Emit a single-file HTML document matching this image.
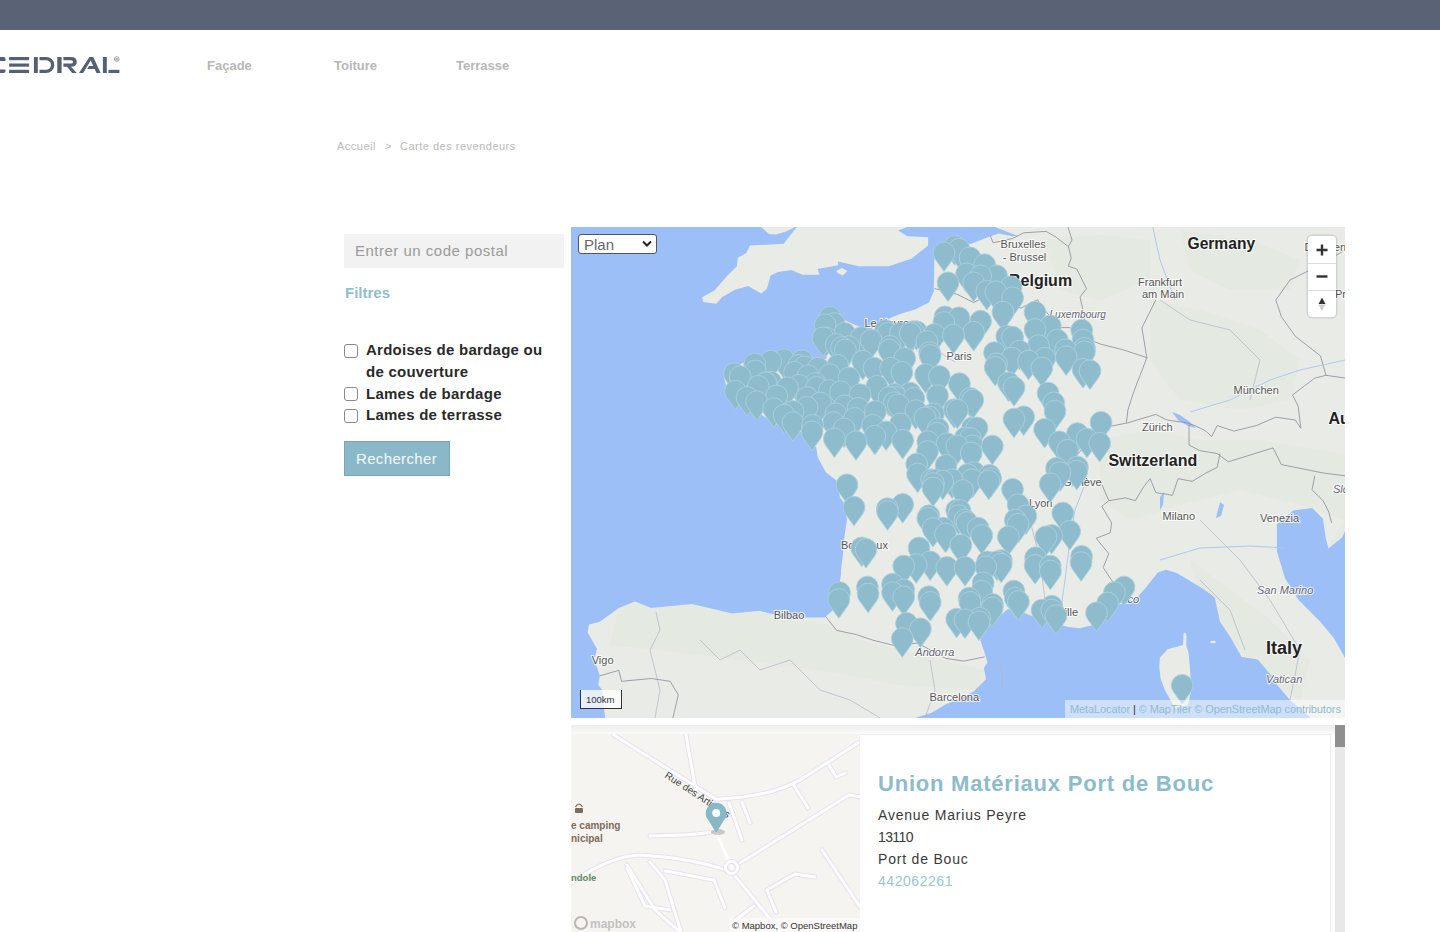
<!DOCTYPE html>
<html><head><meta charset="utf-8">
<style>
html,body{margin:0;padding:0;width:1440px;height:932px;overflow:hidden;background:#fff;font-family:"Liberation Sans",sans-serif;}
.abs{position:absolute;}
#topbar{left:0;top:0;width:1440px;height:30px;background:#5a6275;}
.nav{top:58px;font-size:13px;font-weight:bold;color:#b7b7b7;white-space:nowrap;}
.bc{top:140px;font-size:11px;color:#b9b9b9;white-space:nowrap;letter-spacing:0.5px;}
#postal{left:344px;top:234px;width:220px;height:34px;background:#f2f2f2;}
#postal span{position:absolute;left:11px;top:8px;font-size:15px;color:#9a9a9a;white-space:nowrap;letter-spacing:0.5px;}
#filtres{left:345px;top:284px;font-size:15px;font-weight:bold;color:#8fbfcf;}
.cb{left:344px;width:12px;height:12px;border:1px solid #8a8a8a;border-radius:3px;background:#fff;}
.lbl{left:366px;font-size:15px;font-weight:bold;color:#2a2a2a;white-space:nowrap;letter-spacing:0.25px;}
#btn{left:344px;top:441px;width:104px;height:33px;background:#8ab8c8;border:1px solid #76a6b6;}
#btn span{position:absolute;left:11px;top:8px;font-size:15px;color:#f4f8fa;letter-spacing:0.35px;}
#map{left:571px;top:227px;width:774px;height:491px;overflow:hidden;background:#e9ebe7;}
#list{left:571px;top:725px;width:774px;height:207px;background:#fff;overflow:hidden;}
</style></head>
<body>
<div id="topbar" class="abs"></div>
<!-- logo -->
<svg class="abs" style="left:0;top:50px" width="125" height="30" viewBox="0 50 125 30">
<g fill="#566074">
<path d="M-6 57 H3.5 Q5.5 57 5.5 59 V61 H-6 Z"/>
<path d="M-6 73 H3.5 Q5.5 73 5.5 71 V69.5 H-6 Z"/>
<rect x="9.1" y="57" width="20" height="3.2"/>
<rect x="9.1" y="63.5" width="20" height="3.2"/>
<rect x="9.1" y="69.8" width="20" height="3.2"/>
<rect x="33.9" y="57" width="3.9" height="16"/>
<path d="M39.5 57 H46 A8.3 8 0 0 1 46 73 H39.5 V69.8 H46 A5 4.8 0 0 0 46 60.2 H39.5 Z"/>
<rect x="57.3" y="57" width="4.3" height="16"/>
<path d="M63.4 57 H71 Q76.8 57 76.8 61.9 Q76.8 66.7 71 66.7 L76.8 73 H72.2 L67 66.7 H63.4 V63.5 H71 Q73 63.5 73 61.9 Q73 60.2 71 60.2 H63.4 Z"/>
<path d="M79 73 L89.4 57 H93.2 L100.7 73 H96.5 L94.6 69 H87.2 L89 66 H93.2 L90.7 60.6 L83.2 73 Z"/>
<rect x="102.9" y="57" width="3.9" height="16"/>
<rect x="108.5" y="69.8" width="10.9" height="3.2"/>
<circle cx="116.8" cy="59.1" r="2.4" fill="none" stroke="#8a92a2" stroke-width="0.8"/><text x="115.3" y="60.8" font-size="4.2" font-weight="bold" fill="#8a92a2" font-family="Liberation Sans">R</text>
</g>
</svg>
<div class="abs nav" style="left:207px">Façade</div>
<div class="abs nav" style="left:334px">Toiture</div>
<div class="abs nav" style="left:456px">Terrasse</div>
<div class="abs bc" style="left:337px">Accueil</div>
<div class="abs bc" style="left:385px">&gt;</div>
<div class="abs bc" style="left:400px">Carte des revendeurs</div>

<div id="postal" class="abs"><span>Entrer un code postal</span></div>
<div id="filtres" class="abs">Filtres</div>
<div class="abs cb" style="top:344px"></div>
<div class="abs cb" style="top:387px"></div>
<div class="abs cb" style="top:409px"></div>
<div class="abs lbl" style="top:341px">Ardoises de bardage ou</div>
<div class="abs lbl" style="top:363px">de couverture</div>
<div class="abs lbl" style="top:385px">Lames de bardage</div>
<div class="abs lbl" style="top:406px">Lames de terrasse</div>
<div id="btn" class="abs"><span>Rechercher</span></div>

<div id="map" class="abs">
<svg width="774" height="491" viewBox="571 227 774 491" style="position:absolute;left:0;top:0">
<rect x="571" y="227" width="774" height="491" fill="#e9ebe7"/>
<polygon points="1100,440 1150,430 1200,440 1260,440 1320,450 1345,455 1345,520 1300,505 1240,490 1180,505 1130,520 1100,500" fill="#e2e8df" opacity="0.75"/>
<polygon points="1150,300 1200,310 1260,330 1300,360 1290,400 1240,410 1180,400 1150,360" fill="#e2e8df" opacity="0.75"/>
<polygon points="1180,230 1250,240 1300,260 1290,290 1230,290 1190,270" fill="#e2e8df" opacity="0.75"/>
<polygon points="620,605 700,600 780,615 830,625 860,640 900,650 960,665 985,670 980,690 900,685 820,670 740,660 660,650 610,645" fill="#e2e8df" opacity="0.75"/>
<polygon points="1190,560 1230,590 1270,620 1310,660 1300,700 1270,680 1230,640 1200,600" fill="#e2e8df" opacity="0.75"/>
<polygon points="1345,520 1345,600 1320,560" fill="#e2e8df" opacity="0.75"/>
<polygon points="1045,240 1100,235 1150,240 1150,280 1100,300 1060,290" fill="#e2e8df" opacity="0.75"/>
<polygon points="571.0,227.0 995.0,227.0 1018.0,236.0 1012.6,236.3 998.7,233.5 990.3,236.3 970.8,244.0 951.3,242.6 934.5,253.7 933.8,291.4 929.0,302.5 915.0,309.5 900.0,314.0 892.5,316.9 877.5,324.4 870.0,330.0 855.0,325.0 840.0,318.0 828.0,315.0 818.0,320.0 815.0,330.0 820.0,345.0 827.0,358.0 815.0,363.0 805.0,362.0 795.0,359.0 780.0,357.0 760.0,358.0 745.0,362.0 732.0,368.0 724.0,378.0 728.0,392.0 740.0,405.0 760.0,414.0 780.0,426.5 800.9,432.1 816.3,447.4 817.7,457.2 826.0,472.5 837.2,480.9 840.0,497.6 844.2,503.2 847.0,520.0 846.5,523.0 844.4,537.0 843.0,553.7 841.0,570.4 840.9,575.0 835.4,608.1 824.6,617.6 786.7,617.6 759.6,610.8 732.5,613.6 691.9,604.1 651.3,608.1 635.0,601.4 618.8,608.1 599.8,621.7 589.0,624.4 587.6,632.5 597.0,648.8 594.4,659.6 599.8,675.8 598.2,685.0 602.0,689.4 604.3,711.0 605.2,718.0 571.0,718.0" fill="#9dbff8" />
<polygon points="914.8,718.0 931.6,712.7 945.5,704.4 959.5,698.8 973.4,691.8 986.0,679.3 983.9,668.1 987.4,662.5 986.0,657.0 980.4,640.2 983.2,631.8 994.3,620.1 1008.0,608.9 1025.2,613.2 1033.8,616.7 1051.8,622.8 1068.6,627.0 1079.7,628.3 1090.9,625.6 1100.7,615.8 1116.0,606.0 1125.8,601.8 1138.3,596.3 1146.7,586.5 1157.8,572.6 1166.2,569.8 1176.7,572.9 1190.2,581.0 1203.8,589.2 1214.6,597.3 1220.0,621.7 1230.9,637.9 1241.7,656.9 1257.9,659.6 1271.5,675.8 1277.9,685.8 1290.0,700.0 1312.1,719.0" fill="#9dbff8" />
<polygon points="1276.9,524.2 1293.2,510.6 1312.1,507.9 1323.0,518.8 1325.7,537.7 1328.4,548.5 1341.9,537.7 1346.0,529.6 1346.0,659.6 1333.8,637.9 1320.3,621.7 1298.6,600.0 1285.0,578.3 1276.9,551.3" fill="#9dbff8" />
<polygon points="796.9,227.0 789.4,236.3 783.8,243.8 750.0,245.6 746.3,253.1 737.8,257.8 736.9,266.3 727.5,275.6 714.4,290.6 702.2,297.2 703.1,301.9 716.3,303.8 721.9,297.2 735.0,289.7 748.1,285.9 761.3,293.4 766.9,288.8 770.6,275.6 778.1,271.9 791.3,270.0 802.5,274.7 819.4,274.7 817.5,269.1 838.1,265.3 838.1,261.6 858.8,266.3 888.8,266.3 911.3,258.8 928.1,245.6 928.1,237.2 907.5,236.3 898.1,230.6 907.5,226.9" fill="#e9ebe7" />
<polygon points="761.3,227.0 769.0,234.0 776.0,234.4 786.0,231.6 795.0,227.0" fill="#e9ebe7" />
<polygon points="836.3,271.0 841.9,268.1 847.5,271.0 842.8,275.6 837.2,272.8" fill="#e9ebe7" />
<polygon points="1184.3,632.5 1186.4,633.9 1186.4,646.5 1188.5,652.0 1190.0,668.8 1191.3,690.0 1188.0,705.0 1175.0,708.0 1164.8,690.0 1160.6,678.5 1159.2,666.0 1160.0,657.6 1167.6,649.3 1183.0,645.0 1183.6,634.0" fill="#e9ebe7" />
<ellipse cx="1213" cy="642" rx="3" ry="1.3" fill="#e9ebe7"/>
<polygon points="1172,412 1180,415 1190,422 1196,428 1188,426 1178,420" fill="#9dbff8"/>
<polygon points="1068,483 1080,479 1092,480 1085,485 1072,487" fill="#9dbff8"/>
<polygon points="1160,497 1164,492 1163,505 1160,510" fill="#9dbff8"/>
<polygon points="1220,502 1224,505 1221,516 1216,518" fill="#9dbff8"/>
<polyline points="656,612 660,630 650,650 660,690 655,718" fill="none" stroke="#b4b2c4" stroke-width="0.7"/>
<polyline points="700,640 720,660 740,650 760,670 790,660 820,690 850,700 880,718" fill="none" stroke="#b4b2c4" stroke-width="0.7"/>
<polyline points="930,660 935,690 925,718" fill="none" stroke="#b4b2c4" stroke-width="0.7"/>
<polyline points="1001,663 1003,690" fill="none" stroke="#b4b2c4" stroke-width="0.7"/>
<polyline points="1030,520 1040,560 1045,600" fill="none" stroke="#b4b2c4" stroke-width="0.7"/>
<polyline points="1160,300 1190,320 1230,330 1260,360 1250,400" fill="none" stroke="#b4b2c4" stroke-width="0.7"/>
<polyline points="1200,520 1240,560 1270,600 1300,650 1290,700" fill="none" stroke="#b4b2c4" stroke-width="0.7"/>
<polyline points="1200,580 1230,610 1245,650" fill="none" stroke="#b4b2c4" stroke-width="0.7"/>
<polyline points="934.5,288.6 956.8,294.2 973.6,302.5 987.5,295.6 1005.7,303.9 1021,308.1 1037.7,299.7 1040.5,305.3 1060,327.6" fill="none" stroke="#8c8a98" stroke-width="0.8" stroke-linejoin="round"/>
<polyline points="990.3,235.6 993,242.6 1001.5,241.2 1012.6,238.4 1023.8,232.8 1046.1,231.4 1055.9,237 1068.4,246.7 1071.2,257.9 1068.4,266.3" fill="none" stroke="#8c8a98" stroke-width="0.8" stroke-linejoin="round"/>
<polyline points="1068.4,266.3 1076.8,269 1086.5,288.6 1080,297 1083,310 1085,325 1087.3,338.8" fill="none" stroke="#8c8a98" stroke-width="0.8" stroke-linejoin="round"/>
<polyline points="1060,327.6 1069.8,327.6 1087.3,338.8" fill="none" stroke="#8c8a98" stroke-width="0.8" stroke-linejoin="round"/>
<polyline points="1068,227 1072,240 1068.4,246.7" fill="none" stroke="#8c8a98" stroke-width="0.8" stroke-linejoin="round"/>
<polyline points="1087.3,338.8 1100.8,344.2 1122.5,349.6 1146.9,357.7 1141.9,327.9 1155.8,300" fill="none" stroke="#8c8a98" stroke-width="0.8" stroke-linejoin="round"/>
<polyline points="1146.9,357.7 1133.3,393 1127.9,410 1126.5,422.8" fill="none" stroke="#8c8a98" stroke-width="0.8" stroke-linejoin="round"/>
<polyline points="1095,430 1100,428.3 1127.9,422.8 1155.8,414.4 1167,420 1186.5,422.8 1194.9,425.6 1206,431.1 1211.6,436.7 1217.2,425.6 1233.9,431.1 1256.3,425.6 1275.8,417.2 1295.3,420 1300.9,428.3 1298.1,406 1292.5,394.9 1314.8,378.1 1326,375.3 1320.4,355.8 1295.3,336.3 1281.4,316.7 1275.8,300 1290,280 1320,265 1345,250" fill="none" stroke="#8c8a98" stroke-width="0.8" stroke-linejoin="round"/>
<polyline points="1326,375.3 1345,378" fill="none" stroke="#8c8a98" stroke-width="0.8" stroke-linejoin="round"/>
<polyline points="1189,425 1189,445 1200,450.7 1217.2,453.5 1228.3,461.8 1273,447.9 1281.4,464.6 1323.2,473 1345,475.8" fill="none" stroke="#8c8a98" stroke-width="0.8" stroke-linejoin="round"/>
<polyline points="1150.2,478.6 1155.8,492.6 1172.5,495.3 1178.1,478.6 1192.1,481.4 1206,473 1217.2,467.4 1220,453.5" fill="none" stroke="#8c8a98" stroke-width="0.8" stroke-linejoin="round"/>
<polyline points="1314.8,475.8 1312,489.7 1323.2,500.9 1328.8,512 1331.6,523" fill="none" stroke="#8c8a98" stroke-width="0.8" stroke-linejoin="round"/>
<polyline points="1095,430 1085,445 1075,458 1068,472 1072,480 1085,484" fill="none" stroke="#8c8a98" stroke-width="0.8" stroke-linejoin="round"/>
<polyline points="1085,484 1100.4,481.2 1108.8,500.7 1101.8,506.3 1111.6,523 1110.2,532.8 1096.2,538.3 1108.8,553.7 1103.2,567.6 1111.6,580.2 1125,598" fill="none" stroke="#8c8a98" stroke-width="0.8" stroke-linejoin="round"/>
<polyline points="1108.8,500.7 1125.5,497.9 1135.3,500.7 1143.7,486.7 1150.2,478.6" fill="none" stroke="#8c8a98" stroke-width="0.8" stroke-linejoin="round"/>
<polyline points="825.6,616.5 836.7,630.4 856.3,634.6 873,640.2 895.3,645.8 917.6,643 945.5,658.3 963.7,661.1 984.6,656.9" fill="none" stroke="#8c8a98" stroke-width="0.8" stroke-linejoin="round"/>
<polyline points="599.8,675.8 618.8,670.4 621.5,681.3 651.3,678.5 670.2,681.3 678.3,694.8 672.9,718" fill="none" stroke="#8c8a98" stroke-width="0.8" stroke-linejoin="round"/>
<polyline points="1160,560 1200,548 1250,546 1285,548" fill="none" stroke="#a8c4f0" stroke-width="0.9"/>
<polyline points="1085,484 1075,510 1070,540 1065,580 1060,615" fill="none" stroke="#a8c4f0" stroke-width="0.9"/>
<polyline points="1190,412 1230,400 1270,380 1300,370 1345,360" fill="none" stroke="#a8c4f0" stroke-width="0.9"/>
<polyline points="1148,205 1160,260 1175,300" fill="none" stroke="#a8c4f0" stroke-width="0.9"/>
<polyline points="930,345 945,356 955,362" fill="none" stroke="#a8c4f0" stroke-width="0.9"/>
<g font-family="Liberation Sans" paint-order="stroke" stroke="#fff" stroke-width="2" stroke-opacity="0.8">
<text x="1000.6" y="248" font-size="11" font-weight="normal" font-style="normal" fill="#555">Bruxelles</text>
<text x="1002.8" y="261" font-size="11" font-weight="normal" font-style="normal" fill="#555">- Brussel</text>
<text x="1009" y="286.3" font-size="16" font-weight="bold" font-style="normal" fill="#222">Belgium</text>
<text x="1187.5" y="249.4" font-size="15.6" font-weight="bold" font-style="normal" fill="#222">Germany</text>
<text x="1138" y="286" font-size="11" font-weight="normal" font-style="normal" fill="#555">Frankfurt</text>
<text x="1142" y="298.1" font-size="11" font-weight="normal" font-style="normal" fill="#555">am Main</text>
<text x="1049.4" y="318.4" font-size="10.2" font-weight="normal" font-style="italic" fill="#666677">Luxembourg</text>
<text x="1233.6" y="394.3" font-size="11" font-weight="normal" font-style="normal" fill="#555">München</text>
<text x="1142" y="430.8" font-size="11" font-weight="normal" font-style="normal" fill="#555">Zürich</text>
<text x="1108.4" y="465.5" font-size="16" font-weight="bold" font-style="normal" fill="#222">Switzerland</text>
<text x="1328.4" y="423.5" font-size="16" font-weight="bold" font-style="normal" fill="#222">Austria</text>
<text x="1304.5" y="250.7" font-size="11" font-weight="normal" font-style="normal" fill="#555">Dresden</text>
<text x="1335" y="298" font-size="11" font-weight="normal" font-style="normal" fill="#555">Praha</text>
<text x="1063" y="486.3" font-size="11" font-weight="normal" font-style="normal" fill="#555">Genève</text>
<text x="1029" y="506.6" font-size="11" font-weight="normal" font-style="normal" fill="#555">Lyon</text>
<text x="1162.6" y="520.1" font-size="11" font-weight="normal" font-style="normal" fill="#555">Milano</text>
<text x="1260" y="521.5" font-size="11" font-weight="normal" font-style="normal" fill="#555">Venezia</text>
<text x="1333" y="493" font-size="11" font-weight="normal" font-style="italic" fill="#666677">Slovenija</text>
<text x="1257" y="594" font-size="11" font-weight="normal" font-style="italic" fill="#666677">San Marino</text>
<text x="1266" y="654.2" font-size="18" font-weight="bold" font-style="normal" fill="#222">Italy</text>
<text x="1266" y="683.4" font-size="11" font-weight="normal" font-style="italic" fill="#666677">Vatican</text>
<text x="1034" y="616.3" font-size="11" font-weight="normal" font-style="normal" fill="#555">Marseille</text>
<text x="1100" y="602.7" font-size="11" font-weight="normal" font-style="italic" fill="#666677">Monaco</text>
<text x="929.5" y="700.9" font-size="11" font-weight="normal" font-style="normal" fill="#555">Barcelona</text>
<text x="773.7" y="619" font-size="11" font-weight="normal" font-style="normal" fill="#555">Bilbao</text>
<text x="591.7" y="663.7" font-size="11" font-weight="normal" font-style="normal" fill="#555">Vigo</text>
<text x="915.3" y="655.5" font-size="11" font-weight="normal" font-style="italic" fill="#666677">Andorra</text>
<text x="840.9" y="548.5" font-size="11" font-weight="normal" font-style="normal" fill="#555">Bordeaux</text>
<text x="946.6" y="359.7" font-size="11" font-weight="normal" font-style="normal" fill="#555">Paris</text>
<text x="864.4" y="327.2" font-size="11" font-weight="normal" font-style="normal" fill="#555">Le Havre</text>
</g>
<g fill="#8fbccc" stroke="#acd0dc" stroke-width="0.9"><path d="M954.6 265.2L945.8 253.0A10.9 10.9 0 1 1 963.4 253.0Z"/><path d="M959.0 268.0L950.2 255.8A10.9 10.9 0 1 1 967.8 255.8Z"/><path d="M944.0 271.5L935.2 259.3A10.9 10.9 0 1 1 952.8 259.3Z"/><path d="M970.0 276.5L961.2 264.3A10.9 10.9 0 1 1 978.8 264.3Z"/><path d="M984.7 283.4L975.9 271.2A10.9 10.9 0 1 1 993.5 271.2Z"/><path d="M966.6 292.5L957.8 280.3A10.9 10.9 0 1 1 975.4 280.3Z"/><path d="M996.6 294.5L987.8 282.3A10.9 10.9 0 1 1 1005.4 282.3Z"/><path d="M980.6 294.5L971.8 282.3A10.9 10.9 0 1 1 989.4 282.3Z"/><path d="M948.0 301.5L939.2 289.3A10.9 10.9 0 1 1 956.8 289.3Z"/><path d="M973.6 301.5L964.8 289.3A10.9 10.9 0 1 1 982.4 289.3Z"/><path d="M1011.0 305.5L1002.2 293.3A10.9 10.9 0 1 1 1019.8 293.3Z"/><path d="M986.8 309.9L978.0 297.7A10.9 10.9 0 1 1 995.6 297.7Z"/><path d="M995.9 310.5L987.1 298.3A10.9 10.9 0 1 1 1004.7 298.3Z"/><path d="M1012.6 316.5L1003.8 304.3A10.9 10.9 0 1 1 1021.4 304.3Z"/><path d="M1002.9 330.8L994.1 318.6A10.9 10.9 0 1 1 1011.7 318.6Z"/><path d="M1035.0 330.8L1026.2 318.6A10.9 10.9 0 1 1 1043.8 318.6Z"/><path d="M945.0 335.5L936.2 323.3A10.9 10.9 0 1 1 953.8 323.3Z"/><path d="M830.0 335.9L821.2 323.7A10.9 10.9 0 1 1 838.8 323.7Z"/><path d="M959.0 336.5L950.2 324.3A10.9 10.9 0 1 1 967.8 324.3Z"/><path d="M980.6 339.9L971.8 327.7A10.9 10.9 0 1 1 989.4 327.7Z"/><path d="M943.9 341.2L935.1 329.0A10.9 10.9 0 1 1 952.7 329.0Z"/><path d="M834.2 342.2L825.4 330.0A10.9 10.9 0 1 1 843.0 330.0Z"/><path d="M825.2 343.6L816.4 331.4A10.9 10.9 0 1 1 834.0 331.4Z"/><path d="M1050.3 344.7L1041.5 332.5A10.9 10.9 0 1 1 1059.1 332.5Z"/><path d="M1035.0 348.2L1026.2 336.0A10.9 10.9 0 1 1 1043.8 336.0Z"/><path d="M1081.7 348.9L1072.9 336.7A10.9 10.9 0 1 1 1090.5 336.7Z"/><path d="M885.5 349.2L876.7 337.0A10.9 10.9 0 1 1 894.3 337.0Z"/><path d="M916.4 350.3L907.6 338.1A10.9 10.9 0 1 1 925.2 338.1Z"/><path d="M912.8 350.4L904.0 338.2A10.9 10.9 0 1 1 921.6 338.2Z"/><path d="M973.6 351.0L964.8 338.8A10.9 10.9 0 1 1 982.4 338.8Z"/><path d="M844.7 352.0L835.9 339.8A10.9 10.9 0 1 1 853.5 339.8Z"/><path d="M888.0 352.0L879.2 339.8A10.9 10.9 0 1 1 896.8 339.8Z"/><path d="M900.5 352.0L891.7 339.8A10.9 10.9 0 1 1 909.3 339.8Z"/><path d="M910.3 352.0L901.5 339.8A10.9 10.9 0 1 1 919.1 339.8Z"/><path d="M934.5 353.1L925.7 340.9A10.9 10.9 0 1 1 943.3 340.9Z"/><path d="M953.4 353.8L944.6 341.6A10.9 10.9 0 1 1 962.2 341.6Z"/><path d="M1006.8 354.9L998.0 342.7A10.9 10.9 0 1 1 1015.6 342.7Z"/><path d="M1012.6 355.9L1003.8 343.7A10.9 10.9 0 1 1 1021.4 343.7Z"/><path d="M861.4 356.2L852.6 344.0A10.9 10.9 0 1 1 870.2 344.0Z"/><path d="M826.0 356.5L817.2 344.3A10.9 10.9 0 1 1 834.8 344.3Z"/><path d="M823.0 356.5L814.2 344.3A10.9 10.9 0 1 1 831.8 344.3Z"/><path d="M1057.3 358.7L1048.5 346.5A10.9 10.9 0 1 1 1066.1 346.5Z"/><path d="M1083.0 358.7L1074.2 346.5A10.9 10.9 0 1 1 1091.8 346.5Z"/><path d="M871.2 358.9L862.4 346.7A10.9 10.9 0 1 1 880.0 346.7Z"/><path d="M926.9 360.1L918.1 347.9A10.9 10.9 0 1 1 935.7 347.9Z"/><path d="M836.3 363.1L827.5 350.9A10.9 10.9 0 1 1 845.1 350.9Z"/><path d="M1038.4 364.3L1029.6 352.1A10.9 10.9 0 1 1 1047.2 352.1Z"/><path d="M890.0 365.0L881.2 352.8A10.9 10.9 0 1 1 898.8 352.8Z"/><path d="M848.8 365.2L840.0 353.0A10.9 10.9 0 1 1 857.6 353.0Z"/><path d="M841.6 366.2L832.8 354.0A10.9 10.9 0 1 1 850.4 354.0Z"/><path d="M1084.5 367.0L1075.7 354.8A10.9 10.9 0 1 1 1093.3 354.8Z"/><path d="M1065.6 368.5L1056.8 356.3A10.9 10.9 0 1 1 1074.4 356.3Z"/><path d="M845.4 368.7L836.6 356.5A10.9 10.9 0 1 1 854.2 356.5Z"/><path d="M889.3 368.7L880.5 356.5A10.9 10.9 0 1 1 898.1 356.5Z"/><path d="M1019.6 369.8L1010.8 357.6A10.9 10.9 0 1 1 1028.4 357.6Z"/><path d="M1084.4 370.5L1075.6 358.3A10.9 10.9 0 1 1 1093.2 358.3Z"/><path d="M929.6 371.2L920.8 359.0A10.9 10.9 0 1 1 938.4 359.0Z"/><path d="M994.5 371.2L985.7 359.0A10.9 10.9 0 1 1 1003.3 359.0Z"/><path d="M930.2 374.1L921.4 361.9A10.9 10.9 0 1 1 939.0 361.9Z"/><path d="M1066.2 375.5L1057.4 363.3A10.9 10.9 0 1 1 1075.0 363.3Z"/><path d="M1044.7 376.8L1035.9 364.6A10.9 10.9 0 1 1 1053.5 364.6Z"/><path d="M1011.8 376.9L1003.0 364.7A10.9 10.9 0 1 1 1020.6 364.7Z"/><path d="M904.7 377.1L895.9 364.9A10.9 10.9 0 1 1 913.5 364.9Z"/><path d="M784.0 378.5L775.2 366.3A10.9 10.9 0 1 1 792.8 366.3Z"/><path d="M802.0 379.5L793.2 367.3A10.9 10.9 0 1 1 810.8 367.3Z"/><path d="M1028.6 379.7L1019.8 367.5A10.9 10.9 0 1 1 1037.4 367.5Z"/><path d="M862.8 379.9L854.0 367.7A10.9 10.9 0 1 1 871.6 367.7Z"/><path d="M770.8 379.9L762.0 367.7A10.9 10.9 0 1 1 779.6 367.7Z"/><path d="M996.5 382.5L987.7 370.3A10.9 10.9 0 1 1 1005.3 370.3Z"/><path d="M754.7 382.7L745.9 370.5A10.9 10.9 0 1 1 763.5 370.5Z"/><path d="M837.7 384.0L828.9 371.8A10.9 10.9 0 1 1 846.5 371.8Z"/><path d="M798.7 384.0L789.9 371.8A10.9 10.9 0 1 1 807.5 371.8Z"/><path d="M804.3 385.5L795.5 373.3A10.9 10.9 0 1 1 813.1 373.3Z"/><path d="M995.2 386.0L986.4 373.8A10.9 10.9 0 1 1 1004.0 373.8Z"/><path d="M1041.8 386.6L1033.0 374.4A10.9 10.9 0 1 1 1050.6 374.4Z"/><path d="M874.0 386.8L865.2 374.6A10.9 10.9 0 1 1 882.8 374.6Z"/><path d="M890.7 386.8L881.9 374.6A10.9 10.9 0 1 1 899.5 374.6Z"/><path d="M818.2 386.8L809.4 374.6A10.9 10.9 0 1 1 827.0 374.6Z"/><path d="M1083.0 388.0L1074.2 375.8A10.9 10.9 0 1 1 1091.8 375.8Z"/><path d="M1090.0 389.5L1081.2 377.3A10.9 10.9 0 1 1 1098.8 377.3Z"/><path d="M755.4 389.6L746.6 377.4A10.9 10.9 0 1 1 764.2 377.4Z"/><path d="M901.9 391.0L893.1 378.8A10.9 10.9 0 1 1 910.7 378.8Z"/><path d="M794.5 391.0L785.7 378.8A10.9 10.9 0 1 1 803.3 378.8Z"/><path d="M734.5 392.4L725.7 380.2A10.9 10.9 0 1 1 743.3 380.2Z"/><path d="M925.6 393.2L916.8 381.0A10.9 10.9 0 1 1 934.4 381.0Z"/><path d="M829.8 393.3L821.0 381.1A10.9 10.9 0 1 1 838.6 381.1Z"/><path d="M808.0 394.3L799.2 382.1A10.9 10.9 0 1 1 816.8 382.1Z"/><path d="M939.3 395.1L930.5 382.9A10.9 10.9 0 1 1 948.1 382.9Z"/><path d="M740.1 395.2L731.3 383.0A10.9 10.9 0 1 1 748.9 383.0Z"/><path d="M849.0 396.5L840.2 384.3A10.9 10.9 0 1 1 857.8 384.3Z"/><path d="M770.8 400.8L762.0 388.6A10.9 10.9 0 1 1 779.6 388.6Z"/><path d="M1008.6 401.5L999.8 389.3A10.9 10.9 0 1 1 1017.4 389.3Z"/><path d="M766.0 401.5L757.2 389.3A10.9 10.9 0 1 1 774.8 389.3Z"/><path d="M815.4 402.2L806.6 390.0A10.9 10.9 0 1 1 824.2 390.0Z"/><path d="M959.4 402.4L950.6 390.2A10.9 10.9 0 1 1 968.2 390.2Z"/><path d="M799.0 404.0L790.2 391.8A10.9 10.9 0 1 1 807.8 391.8Z"/><path d="M758.2 405.0L749.4 392.8A10.9 10.9 0 1 1 767.0 392.8Z"/><path d="M876.8 405.0L868.0 392.8A10.9 10.9 0 1 1 885.6 392.8Z"/><path d="M816.7 406.0L807.9 393.8A10.9 10.9 0 1 1 825.5 393.8Z"/><path d="M1014.0 406.2L1005.2 394.0A10.9 10.9 0 1 1 1022.8 394.0Z"/><path d="M787.5 406.4L778.7 394.2A10.9 10.9 0 1 1 796.3 394.2Z"/><path d="M829.4 409.2L820.6 397.0A10.9 10.9 0 1 1 838.2 397.0Z"/><path d="M735.4 409.9L726.6 397.7A10.9 10.9 0 1 1 744.2 397.7Z"/><path d="M840.5 410.5L831.7 398.3A10.9 10.9 0 1 1 849.3 398.3Z"/><path d="M1048.0 411.7L1039.2 399.5A10.9 10.9 0 1 1 1056.8 399.5Z"/><path d="M910.3 411.9L901.5 399.7A10.9 10.9 0 1 1 919.1 399.7Z"/><path d="M894.6 413.0L885.8 400.8A10.9 10.9 0 1 1 903.4 400.8Z"/><path d="M860.0 413.3L851.2 401.1A10.9 10.9 0 1 1 868.8 401.1Z"/><path d="M937.5 414.2L928.7 402.0A10.9 10.9 0 1 1 946.3 402.0Z"/><path d="M776.7 414.5L767.9 402.3A10.9 10.9 0 1 1 785.5 402.3Z"/><path d="M747.1 416.1L738.3 403.9A10.9 10.9 0 1 1 755.9 403.9Z"/><path d="M807.0 416.1L798.2 403.9A10.9 10.9 0 1 1 815.8 403.9Z"/><path d="M896.3 416.1L887.5 403.9A10.9 10.9 0 1 1 905.1 403.9Z"/><path d="M889.1 416.1L880.3 403.9A10.9 10.9 0 1 1 897.9 403.9Z"/><path d="M970.3 417.0L961.5 404.8A10.9 10.9 0 1 1 979.1 404.8Z"/><path d="M913.8 417.0L905.0 404.8A10.9 10.9 0 1 1 922.6 404.8Z"/><path d="M972.8 418.7L964.0 406.5A10.9 10.9 0 1 1 981.6 406.5Z"/><path d="M756.8 420.3L748.0 408.1A10.9 10.9 0 1 1 765.6 408.1Z"/><path d="M894.4 421.3L885.6 409.1A10.9 10.9 0 1 1 903.2 409.1Z"/><path d="M1053.7 421.5L1044.9 409.3A10.9 10.9 0 1 1 1062.5 409.3Z"/><path d="M820.4 421.7L811.6 409.5A10.9 10.9 0 1 1 829.2 409.5Z"/><path d="M898.3 423.5L889.5 411.3A10.9 10.9 0 1 1 907.1 411.3Z"/><path d="M844.7 424.5L835.9 412.3A10.9 10.9 0 1 1 853.5 412.3Z"/><path d="M807.0 425.9L798.2 413.7A10.9 10.9 0 1 1 815.8 413.7Z"/><path d="M858.0 426.9L849.2 414.7A10.9 10.9 0 1 1 866.8 414.7Z"/><path d="M773.6 427.3L764.8 415.1A10.9 10.9 0 1 1 782.4 415.1Z"/><path d="M954.3 428.3L945.5 416.1A10.9 10.9 0 1 1 963.1 416.1Z"/><path d="M957.3 428.8L948.5 416.6A10.9 10.9 0 1 1 966.1 416.6Z"/><path d="M915.8 429.3L907.0 417.1A10.9 10.9 0 1 1 924.6 417.1Z"/><path d="M1055.0 429.9L1046.2 417.7A10.9 10.9 0 1 1 1063.8 417.7Z"/><path d="M793.1 430.1L784.3 417.9A10.9 10.9 0 1 1 801.9 417.9Z"/><path d="M875.4 430.1L866.6 417.9A10.9 10.9 0 1 1 884.2 417.9Z"/><path d="M933.4 432.5L924.6 420.3A10.9 10.9 0 1 1 942.2 420.3Z"/><path d="M835.8 432.5L827.0 420.3A10.9 10.9 0 1 1 844.6 420.3Z"/><path d="M784.2 433.8L775.4 421.6A10.9 10.9 0 1 1 793.0 421.6Z"/><path d="M1023.7 435.5L1014.9 423.3A10.9 10.9 0 1 1 1032.5 423.3Z"/><path d="M929.1 435.6L920.3 423.4A10.9 10.9 0 1 1 937.9 423.4Z"/><path d="M925.0 436.5L916.2 424.3A10.9 10.9 0 1 1 933.8 424.3Z"/><path d="M854.5 437.0L845.7 424.8A10.9 10.9 0 1 1 863.3 424.8Z"/><path d="M1014.0 437.8L1005.2 425.6A10.9 10.9 0 1 1 1022.8 425.6Z"/><path d="M1101.0 441.0L1092.2 428.8A10.9 10.9 0 1 1 1109.8 428.8Z"/><path d="M833.5 441.2L824.7 429.0A10.9 10.9 0 1 1 842.3 429.0Z"/><path d="M793.0 441.2L784.2 429.0A10.9 10.9 0 1 1 801.8 429.0Z"/><path d="M900.5 442.6L891.7 430.4A10.9 10.9 0 1 1 909.3 430.4Z"/><path d="M812.6 444.0L803.8 431.8A10.9 10.9 0 1 1 821.4 431.8Z"/><path d="M872.6 444.0L863.8 431.8A10.9 10.9 0 1 1 881.4 431.8Z"/><path d="M972.5 446.5L963.7 434.3A10.9 10.9 0 1 1 981.3 434.3Z"/><path d="M977.0 446.6L968.2 434.4A10.9 10.9 0 1 1 985.8 434.4Z"/><path d="M844.0 447.5L835.2 435.3A10.9 10.9 0 1 1 852.8 435.3Z"/><path d="M938.1 447.6L929.3 435.4A10.9 10.9 0 1 1 946.9 435.4Z"/><path d="M1044.6 448.0L1035.8 435.8A10.9 10.9 0 1 1 1053.4 435.8Z"/><path d="M812.0 450.5L803.2 438.3A10.9 10.9 0 1 1 820.8 438.3Z"/><path d="M886.0 450.5L877.2 438.3A10.9 10.9 0 1 1 894.8 438.3Z"/><path d="M936.7 452.0L927.9 439.8A10.9 10.9 0 1 1 945.5 439.8Z"/><path d="M1077.4 452.2L1068.6 440.0A10.9 10.9 0 1 1 1086.2 440.0Z"/><path d="M874.8 454.8L866.0 442.6A10.9 10.9 0 1 1 883.6 442.6Z"/><path d="M965.2 456.6L956.4 444.4A10.9 10.9 0 1 1 974.0 444.4Z"/><path d="M970.2 457.1L961.4 444.9A10.9 10.9 0 1 1 979.0 444.9Z"/><path d="M834.4 457.5L825.6 445.3A10.9 10.9 0 1 1 843.2 445.3Z"/><path d="M1087.0 457.8L1078.2 445.6A10.9 10.9 0 1 1 1095.8 445.6Z"/><path d="M902.7 458.9L893.9 446.7A10.9 10.9 0 1 1 911.5 446.7Z"/><path d="M856.0 460.3L847.2 448.1A10.9 10.9 0 1 1 864.8 448.1Z"/><path d="M927.8 460.3L919.0 448.1A10.9 10.9 0 1 1 936.6 448.1Z"/><path d="M1059.3 460.5L1050.5 448.3A10.9 10.9 0 1 1 1068.1 448.3Z"/><path d="M1099.7 461.9L1090.9 449.7A10.9 10.9 0 1 1 1108.5 449.7Z"/><path d="M947.0 462.3L938.2 450.1A10.9 10.9 0 1 1 955.8 450.1Z"/><path d="M972.5 464.5L963.7 452.3A10.9 10.9 0 1 1 981.3 452.3Z"/><path d="M957.0 464.5L948.2 452.3A10.9 10.9 0 1 1 965.8 452.3Z"/><path d="M992.3 464.7L983.5 452.5A10.9 10.9 0 1 1 1001.1 452.5Z"/><path d="M1067.6 468.9L1058.8 456.7A10.9 10.9 0 1 1 1076.4 456.7Z"/><path d="M927.5 470.2L918.7 458.0A10.9 10.9 0 1 1 936.3 458.0Z"/><path d="M971.2 471.6L962.4 459.4A10.9 10.9 0 1 1 980.0 459.4Z"/><path d="M916.7 482.7L907.9 470.5A10.9 10.9 0 1 1 925.5 470.5Z"/><path d="M946.0 484.1L937.2 471.9A10.9 10.9 0 1 1 954.8 471.9Z"/><path d="M1077.4 485.7L1068.6 473.5A10.9 10.9 0 1 1 1086.2 473.5Z"/><path d="M1056.5 487.0L1047.7 474.8A10.9 10.9 0 1 1 1065.3 474.8Z"/><path d="M1076.7 489.9L1067.9 477.7A10.9 10.9 0 1 1 1085.5 477.7Z"/><path d="M974.2 491.2L965.4 479.0A10.9 10.9 0 1 1 983.0 479.0Z"/><path d="M1060.0 491.3L1051.2 479.1A10.9 10.9 0 1 1 1068.8 479.1Z"/><path d="M917.6 492.7L908.8 480.5A10.9 10.9 0 1 1 926.4 480.5Z"/><path d="M967.6 493.2L958.8 481.0A10.9 10.9 0 1 1 976.4 481.0Z"/><path d="M989.5 494.0L980.7 481.8A10.9 10.9 0 1 1 998.3 481.8Z"/><path d="M990.7 497.2L981.9 485.0A10.9 10.9 0 1 1 999.5 485.0Z"/><path d="M972.0 498.3L963.2 486.1A10.9 10.9 0 1 1 980.8 486.1Z"/><path d="M931.5 498.4L922.7 486.2A10.9 10.9 0 1 1 940.3 486.2Z"/><path d="M952.1 498.4L943.3 486.2A10.9 10.9 0 1 1 960.9 486.2Z"/><path d="M935.1 498.7L926.3 486.5A10.9 10.9 0 1 1 943.9 486.5Z"/><path d="M988.8 499.7L980.0 487.5A10.9 10.9 0 1 1 997.6 487.5Z"/><path d="M942.7 499.7L933.9 487.5A10.9 10.9 0 1 1 951.5 487.5Z"/><path d="M933.4 502.2L924.6 490.0A10.9 10.9 0 1 1 942.2 490.0Z"/><path d="M1050.2 502.5L1041.4 490.3A10.9 10.9 0 1 1 1059.0 490.3Z"/><path d="M847.0 503.5L838.2 491.3A10.9 10.9 0 1 1 855.8 491.3Z"/><path d="M933.0 506.6L924.2 494.4A10.9 10.9 0 1 1 941.8 494.4Z"/><path d="M1012.5 508.0L1003.7 495.8A10.9 10.9 0 1 1 1021.3 495.8Z"/><path d="M962.7 509.2L953.9 497.0A10.9 10.9 0 1 1 971.5 497.0Z"/><path d="M902.7 523.1L893.9 510.9A10.9 10.9 0 1 1 911.5 510.9Z"/><path d="M1018.1 523.4L1009.3 511.2A10.9 10.9 0 1 1 1026.9 511.2Z"/><path d="M854.0 525.9L845.2 513.7A10.9 10.9 0 1 1 862.8 513.7Z"/><path d="M887.4 527.3L878.6 515.1A10.9 10.9 0 1 1 896.2 515.1Z"/><path d="M956.7 528.9L947.9 516.7A10.9 10.9 0 1 1 965.5 516.7Z"/><path d="M959.9 529.3L951.1 517.1A10.9 10.9 0 1 1 968.7 517.1Z"/><path d="M887.6 530.3L878.8 518.1A10.9 10.9 0 1 1 896.4 518.1Z"/><path d="M1062.8 531.7L1054.0 519.5A10.9 10.9 0 1 1 1071.6 519.5Z"/><path d="M958.5 534.3L949.7 522.1A10.9 10.9 0 1 1 967.3 522.1Z"/><path d="M928.9 534.4L920.1 522.2A10.9 10.9 0 1 1 937.7 522.2Z"/><path d="M1025.8 534.5L1017.0 522.3A10.9 10.9 0 1 1 1034.6 522.3Z"/><path d="M927.8 537.0L919.0 524.8A10.9 10.9 0 1 1 936.6 524.8Z"/><path d="M965.0 538.7L956.2 526.5A10.9 10.9 0 1 1 973.8 526.5Z"/><path d="M1015.3 538.7L1006.5 526.5A10.9 10.9 0 1 1 1024.1 526.5Z"/><path d="M967.0 541.2L958.2 529.0A10.9 10.9 0 1 1 975.8 529.0Z"/><path d="M1018.1 542.9L1009.3 530.7A10.9 10.9 0 1 1 1026.9 530.7Z"/><path d="M943.2 546.8L934.4 534.6A10.9 10.9 0 1 1 952.0 534.6Z"/><path d="M978.0 546.8L969.2 534.6A10.9 10.9 0 1 1 986.8 534.6Z"/><path d="M933.0 547.1L924.2 534.9A10.9 10.9 0 1 1 941.8 534.9Z"/><path d="M1069.7 549.9L1060.9 537.7A10.9 10.9 0 1 1 1078.5 537.7Z"/><path d="M945.5 552.7L936.7 540.5A10.9 10.9 0 1 1 954.3 540.5Z"/><path d="M981.8 554.1L973.0 541.9A10.9 10.9 0 1 1 990.6 541.9Z"/><path d="M1051.6 554.1L1042.8 541.9A10.9 10.9 0 1 1 1060.4 541.9Z"/><path d="M1008.3 555.5L999.5 543.3A10.9 10.9 0 1 1 1017.1 543.3Z"/><path d="M1046.0 555.5L1037.2 543.3A10.9 10.9 0 1 1 1054.8 543.3Z"/><path d="M960.9 563.8L952.1 551.6A10.9 10.9 0 1 1 969.7 551.6Z"/><path d="M861.8 566.6L853.0 554.4A10.9 10.9 0 1 1 870.6 554.4Z"/><path d="M919.0 566.6L910.2 554.4A10.9 10.9 0 1 1 927.8 554.4Z"/><path d="M866.0 568.0L857.2 555.8A10.9 10.9 0 1 1 874.8 555.8Z"/><path d="M1081.6 575.0L1072.8 562.8A10.9 10.9 0 1 1 1090.4 562.8Z"/><path d="M1035.6 576.4L1026.8 564.2A10.9 10.9 0 1 1 1044.4 564.2Z"/><path d="M1001.4 579.2L992.6 567.0A10.9 10.9 0 1 1 1010.2 567.0Z"/><path d="M930.2 580.5L921.4 568.3A10.9 10.9 0 1 1 939.0 568.3Z"/><path d="M987.4 580.5L978.6 568.3A10.9 10.9 0 1 1 996.2 568.3Z"/><path d="M997.1 580.5L988.3 568.3A10.9 10.9 0 1 1 1005.9 568.3Z"/><path d="M1081.1 581.3L1072.3 569.1A10.9 10.9 0 1 1 1089.9 569.1Z"/><path d="M1001.2 582.8L992.4 570.6A10.9 10.9 0 1 1 1010.0 570.6Z"/><path d="M916.2 583.3L907.4 571.1A10.9 10.9 0 1 1 925.0 571.1Z"/><path d="M1035.1 584.1L1026.3 571.9A10.9 10.9 0 1 1 1043.9 571.9Z"/><path d="M903.7 584.7L894.9 572.5A10.9 10.9 0 1 1 912.5 572.5Z"/><path d="M1050.2 584.7L1041.4 572.5A10.9 10.9 0 1 1 1059.0 572.5Z"/><path d="M985.8 585.4L977.0 573.2A10.9 10.9 0 1 1 994.6 573.2Z"/><path d="M946.9 586.1L938.1 573.9A10.9 10.9 0 1 1 955.7 573.9Z"/><path d="M965.0 586.1L956.2 573.9A10.9 10.9 0 1 1 973.8 573.9Z"/><path d="M1050.4 589.7L1041.6 577.5A10.9 10.9 0 1 1 1059.2 577.5Z"/><path d="M983.2 601.5L974.4 589.3A10.9 10.9 0 1 1 992.0 589.3Z"/><path d="M892.5 602.9L883.7 590.7A10.9 10.9 0 1 1 901.3 590.7Z"/><path d="M867.4 605.7L858.6 593.5A10.9 10.9 0 1 1 876.2 593.5Z"/><path d="M1124.0 605.7L1115.2 593.5A10.9 10.9 0 1 1 1132.8 593.5Z"/><path d="M903.7 608.5L894.9 596.3A10.9 10.9 0 1 1 912.5 596.3Z"/><path d="M1013.9 609.8L1005.1 597.6A10.9 10.9 0 1 1 1022.7 597.6Z"/><path d="M981.8 609.9L973.0 597.7A10.9 10.9 0 1 1 990.6 597.7Z"/><path d="M839.5 611.2L830.7 599.0A10.9 10.9 0 1 1 848.3 599.0Z"/><path d="M1114.4 611.2L1105.6 599.0A10.9 10.9 0 1 1 1123.2 599.0Z"/><path d="M892.5 611.3L883.7 599.1A10.9 10.9 0 1 1 901.3 599.1Z"/><path d="M868.1 612.7L859.3 600.5A10.9 10.9 0 1 1 876.9 600.5Z"/><path d="M928.8 615.4L920.0 603.2A10.9 10.9 0 1 1 937.6 603.2Z"/><path d="M903.7 615.5L894.9 603.3A10.9 10.9 0 1 1 912.5 603.3Z"/><path d="M969.2 616.8L960.4 604.6A10.9 10.9 0 1 1 978.0 604.6Z"/><path d="M1015.3 616.9L1006.5 604.7A10.9 10.9 0 1 1 1024.1 604.7Z"/><path d="M838.8 618.3L830.0 606.1A10.9 10.9 0 1 1 847.6 606.1Z"/><path d="M1018.4 620.3L1009.6 608.1A10.9 10.9 0 1 1 1027.2 608.1Z"/><path d="M930.2 621.1L921.4 608.9A10.9 10.9 0 1 1 939.0 608.9Z"/><path d="M969.9 621.1L961.1 608.9A10.9 10.9 0 1 1 978.7 608.9Z"/><path d="M1107.6 621.7L1098.8 609.5A10.9 10.9 0 1 1 1116.4 609.5Z"/><path d="M992.6 623.1L983.8 610.9A10.9 10.9 0 1 1 1001.4 610.9Z"/><path d="M1051.8 624.9L1043.0 612.7A10.9 10.9 0 1 1 1060.6 612.7Z"/><path d="M992.2 626.6L983.4 614.4A10.9 10.9 0 1 1 1001.0 614.4Z"/><path d="M1042.0 628.7L1033.2 616.5A10.9 10.9 0 1 1 1050.8 616.5Z"/><path d="M1051.8 628.7L1043.0 616.5A10.9 10.9 0 1 1 1060.6 616.5Z"/><path d="M1096.5 631.5L1087.7 619.3A10.9 10.9 0 1 1 1105.3 619.3Z"/><path d="M1056.0 634.3L1047.2 622.1A10.9 10.9 0 1 1 1064.8 622.1Z"/><path d="M979.7 636.9L970.9 624.7A10.9 10.9 0 1 1 988.5 624.7Z"/><path d="M956.7 637.8L947.9 625.6A10.9 10.9 0 1 1 965.5 625.6Z"/><path d="M965.0 638.5L956.2 626.3A10.9 10.9 0 1 1 973.8 626.3Z"/><path d="M979.0 640.5L970.2 628.3A10.9 10.9 0 1 1 987.8 628.3Z"/><path d="M906.5 642.0L897.7 629.8A10.9 10.9 0 1 1 915.3 629.8Z"/><path d="M920.4 647.5L911.6 635.3A10.9 10.9 0 1 1 929.2 635.3Z"/><path d="M902.3 657.3L893.5 645.1A10.9 10.9 0 1 1 911.1 645.1Z"/><path d="M1182.2 704.0L1173.4 691.8A10.9 10.9 0 1 1 1191.0 691.8Z"/></g>
</svg>

<div style="position:absolute;left:7px;top:7px;width:77px;height:18px;border:1px solid #555;border-radius:3px;background:#fff;box-sizing:content-box;">
<span style="position:absolute;left:5px;top:1px;font-size:15px;line-height:17px;color:#666;">Plan</span>
<svg style="position:absolute;left:63px;top:5px" width="10" height="8" viewBox="0 0 10 8"><path d="M1 1.5 L5 5.5 L9 1.5" fill="none" stroke="#222" stroke-width="2"/></svg>
</div>
<div style="position:absolute;left:737px;top:9px;width:28px;height:81px;background:#fff;border-radius:4px;box-shadow:0 0 0 1.5px rgba(0,0,0,0.1);">
<div style="position:absolute;left:0;top:27px;width:28px;height:1px;background:#ddd"></div>
<div style="position:absolute;left:0;top:54px;width:28px;height:1px;background:#ddd"></div>
<svg style="position:absolute;left:0;top:0" width="28" height="81" viewBox="0 0 28 81">
<path d="M14 8.5 V19.5 M8.5 14 H19.5" stroke="#333" stroke-width="2.4"/>
<path d="M8.5 40.5 H19.5" stroke="#333" stroke-width="2.4"/>
<path d="M14 61.5 L17.5 68 H10.5 Z" fill="#333"/>
<path d="M14 75 L17.5 68.5 H10.5 Z" fill="#ccc"/>
</svg>
</div>
<div style="position:absolute;left:9px;top:463px;width:40px;height:18px;border:1px solid #333;border-top:none;background:rgba(255,255,255,0.75);">
<span style="position:absolute;left:5px;top:4px;font-size:9.5px;color:#333;">100km</span>
</div>
<div style="position:absolute;left:494px;top:473px;width:280px;height:18px;background:rgba(255,255,255,0.5);">
<span style="position:absolute;left:5px;top:3px;font-size:11px;color:#8fbccc;white-space:nowrap;letter-spacing:-0.1px">MetaLocator <span style="color:#333">|</span> © MapTiler © OpenStreetMap contributors</span>
</div>

</div>
<div id="list" class="abs">

<div style="position:absolute;left:0;top:0;width:764px;height:12px;background:linear-gradient(#ececec,#fff);"></div>
<div style="position:absolute;left:764px;top:0;width:10px;height:207px;background:#e8e8e8;"></div>
<div style="position:absolute;left:764px;top:0;width:10px;height:22px;background:#8f8f8f;"></div>
<div style="position:absolute;left:0;top:9px;width:760px;height:220px;border:1px solid #ececec;box-sizing:border-box;background:#fff;"></div>
<svg style="position:absolute;left:0;top:9px" width="289" height="198" viewBox="571 734 289 198">
<rect x="571" y="734" width="289" height="198" fill="#f6f4f0"/>
<g fill="none" stroke-linecap="round" stroke-linejoin="round">
<g stroke="#e4e2ee" stroke-width="5">
<path d="M613.7 735 L716.2 799.2 Q770 797 800 780 L858 743"/>
<path d="M686 735 L695 786 L697 795"/>
<path d="M729 803 L742 840"/><path d="M742 802 L750 823"/><path d="M793 784 L808 808"/><path d="M829 765 L836 777 L845 773"/>
<path d="M740 863 L849 795 L860 797"/>
<path d="M650 836 Q700 835 710 832"/>
<path d="M571 883 Q610 856 640 855 Q690 858 726 870"/>
<path d="M735 876 L781 932"/>
<path d="M627 865 L655 910 L680 932"/>
<path d="M650 862 L665 880 L681 932"/>
<path d="M665 871 L714 880 L725 908"/>
<path d="M822 850 L860 907"/>
<path d="M767 890 L776 912 M767 890 L795 874 L815 877"/>
<path d="M733 922 L754 906"/>
<path d="M627 868 L645 906 L670 910"/>
</g>
<g stroke="#ffffff" stroke-width="3">
<path d="M613.7 735 L716.2 799.2 Q770 797 800 780 L858 743"/>
<path d="M686 735 L695 786 L697 795"/>
<path d="M729 803 L742 840"/><path d="M742 802 L750 823"/><path d="M793 784 L808 808"/><path d="M829 765 L836 777 L845 773"/>
<path d="M740 863 L849 795 L860 797"/>
<path d="M650 836 Q700 835 710 832"/>
<path d="M571 883 Q610 856 640 855 Q690 858 726 870"/>
<path d="M735 876 L781 932"/>
<path d="M627 865 L655 910 L680 932"/>
<path d="M650 862 L665 880 L681 932"/>
<path d="M665 871 L714 880 L725 908"/>
<path d="M822 850 L860 907"/>
<path d="M767 890 L776 912 M767 890 L795 874 L815 877"/>
<path d="M733 922 L754 906"/>
<path d="M627 868 L645 906 L670 910"/>
<path d="M716 832 L732 868"/>
</g>
<circle cx="731.5" cy="867.5" r="6" stroke="#e4e2ee" stroke-width="5"/>
<circle cx="731.5" cy="867.5" r="6" stroke="#fff" stroke-width="3"/>
</g>
<text x="664" y="777" font-size="10" fill="#444" transform="rotate(33 664 777)" font-family="Liberation Sans">Rue des Artisans</text>
<g fill="#7d6b5b"><rect x="575" y="808" width="8" height="5" rx="1"/><path d="M575.5 807 Q579 801 582.5 807" stroke="#7d6b5b" fill="none" stroke-width="1.2"/></g>
<text x="571" y="829" font-size="10" font-weight="bold" fill="#7d6b5b" font-family="Liberation Sans">e camping</text>
<text x="571" y="842" font-size="10" font-weight="bold" fill="#7d6b5b" font-family="Liberation Sans">nicipal</text>
<text x="571" y="881" font-size="9.5" font-weight="bold" fill="#5f8a5c" font-family="Liberation Sans">ndole</text>
<ellipse cx="718" cy="832" rx="7" ry="3" fill="rgba(0,0,0,0.18)"/>
<path d="M716.2 833 L709 821 A10.5 10.5 0 1 1 723.4 821 Z" fill="#86b8c8"/>
<circle cx="716.2" cy="813" r="4" fill="#fff"/>
<g opacity="0.55"><circle cx="581" cy="923" r="6" fill="none" stroke="#888" stroke-width="2"/><text x="590" y="927.5" font-size="12" font-weight="bold" fill="#999" font-family="Liberation Sans">mapbox</text></g>
<rect x="730" y="918" width="130" height="14" fill="rgba(255,255,255,0.5)"/>
<text x="732" y="929" font-size="9.5" fill="#333" font-family="Liberation Sans">© Mapbox, © OpenStreetMap</text>
</svg>
<div style="position:absolute;left:307px;top:46px;font-size:22px;font-weight:bold;color:#8cbccc;white-space:nowrap;letter-spacing:0.78px;">Union Matériaux Port de Bouc</div>
<div style="position:absolute;left:307px;top:79px;font-size:14px;line-height:22px;color:#3a3a3a;white-space:nowrap;letter-spacing:0.8px;">Avenue Marius Peyre<br><span style="letter-spacing:-0.6px">13110</span><br>Port de Bouc<br><span style="color:#9cc5d3;letter-spacing:0.55px">442062261</span></div>

</div>
</body></html>
